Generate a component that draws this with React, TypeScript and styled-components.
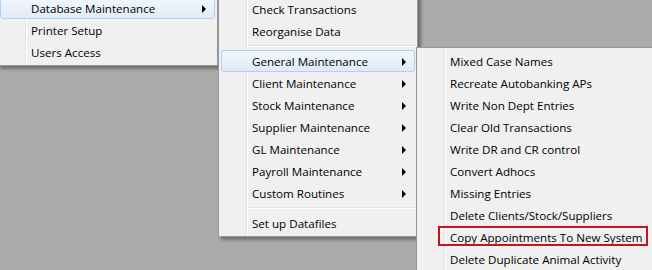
import React from "react";
import styled, { createGlobalStyle } from "styled-components";

const Global = createGlobalStyle`
  html, body { margin: 0; padding: 0; background: #ababab; overflow: hidden; }
  body { width: 652px; height: 270px; font-family: "Open Sans", "Noto Sans", sans-serif; }
`;

const Desktop = styled.div`
  position: relative;
  width: 652px;
  height: 270px;
  background: #ababab;
  overflow: hidden;
`;

const Menu = styled.div<{ $left: number; $top: number; $width: number }>`
  position: absolute;
  left: ${(p) => p.$left}px;
  top: ${(p) => p.$top}px;
  width: ${(p) => p.$width}px;
  box-sizing: border-box;
  background: #f0f0f0;
  border: 1px solid #979797;
  padding: 2px;
  box-shadow: 3px 3px 3px rgba(0, 0, 0, 0.35);
  display: flex;
  flex-direction: column;
  &::before {
    content: "";
    position: absolute;
    left: 27px;
    top: 0;
    bottom: 0;
    width: 1px;
    background: #e2e3e3;
    border-right: 1px solid #ffffff;
  }
`;

const Item = styled.div<{ $active?: boolean; $boxed?: boolean }>`
  position: relative;
  z-index: 1;
  height: 22px;
  box-sizing: border-box;
  display: flex;
  align-items: center;
  padding: 1px 4px 0 30px;
  border: 1px solid ${(p) => (p.$active ? "#aecff7" : "transparent")};
  border-radius: 3px;
  background: ${(p) =>
    p.$active ? "linear-gradient(#f3f7fd, #e0eaf8)" : "transparent"};
  font-size: 11.6px;
  color: #000;
  white-space: nowrap;
  &::after {
    content: "";
    display: ${(p) => (p.$boxed ? "block" : "none")};
    position: absolute;
    left: 18px;
    top: -1px;
    width: 210px;
    height: 20px;
    box-sizing: border-box;
    border: 2px solid #c3151c;
  }
`;

const Label = styled.span`
  flex: 1;
  line-height: 19px;
`;

const Arrow = styled.span`
  width: 0;
  height: 0;
  border-left: 4px solid #000;
  border-top: 4px solid transparent;
  border-bottom: 4px solid transparent;
  margin-right: 4px;
`;

const Separator = styled.div`
  position: relative;
  z-index: 1;
  height: 8px;
  box-sizing: border-box;
  margin-left: 26px;
  padding-top: 3px;
  &::before {
    content: "";
    display: block;
    height: 1px;
    background: #e2e3e3;
    border-bottom: 1px solid #ffffff;
  }
`;

type Entry =
  | { sep: true }
  | { label: string; sub?: boolean; active?: boolean; boxed?: boolean };

const menu1: Entry[] = [
  { label: "Database Maintenance", sub: true, active: true },
  { label: "Printer Setup" },
  { label: "Users Access" },
];

const menu2: Entry[] = [
  { label: "Check Transactions" },
  { label: "Reorganise Data" },
  { sep: true },
  { label: "General Maintenance", sub: true, active: true },
  { label: "Client Maintenance", sub: true },
  { label: "Stock Maintenance", sub: true },
  { label: "Supplier Maintenance", sub: true },
  { label: "GL Maintenance", sub: true },
  { label: "Payroll Maintenance", sub: true },
  { label: "Custom Routines", sub: true },
  { sep: true },
  { label: "Set up Datafiles" },
];

const menu3: Entry[] = [
  { label: "Mixed Case Names" },
  { label: "Recreate Autobanking APs" },
  { label: "Write Non Dept Entries" },
  { label: "Clear Old Transactions" },
  { label: "Write DR and CR control" },
  { label: "Convert Adhocs" },
  { label: "Missing Entries" },
  { label: "Delete Clients/Stock/Suppliers" },
  { label: "Copy Appointments To New System", boxed: true },
  { label: "Delete Duplicate Animal Activity" },
];

function PopupMenu({
  left,
  top,
  width,
  entries,
}: {
  left: number;
  top: number;
  width: number;
  entries: Entry[];
}) {
  return (
    <Menu $left={left} $top={top} $width={width}>
      {entries.map((e, i) =>
        "sep" in e ? (
          <Separator key={i} />
        ) : (
          <Item key={i} $active={e.active} $boxed={e.boxed}>
            <Label>{e.label}</Label>
            {e.sub && <Arrow />}
          </Item>
        )
      )}
    </Menu>
  );
}

export default function App() {
  return (
    <Desktop>
      <Global />
      <PopupMenu left={-3} top={-6} width={221} entries={menu1} />
      <PopupMenu left={218} top={-5} width={200} entries={menu2} />
      <PopupMenu left={416} top={47} width={260} entries={menu3} />
    </Desktop>
  );
}
